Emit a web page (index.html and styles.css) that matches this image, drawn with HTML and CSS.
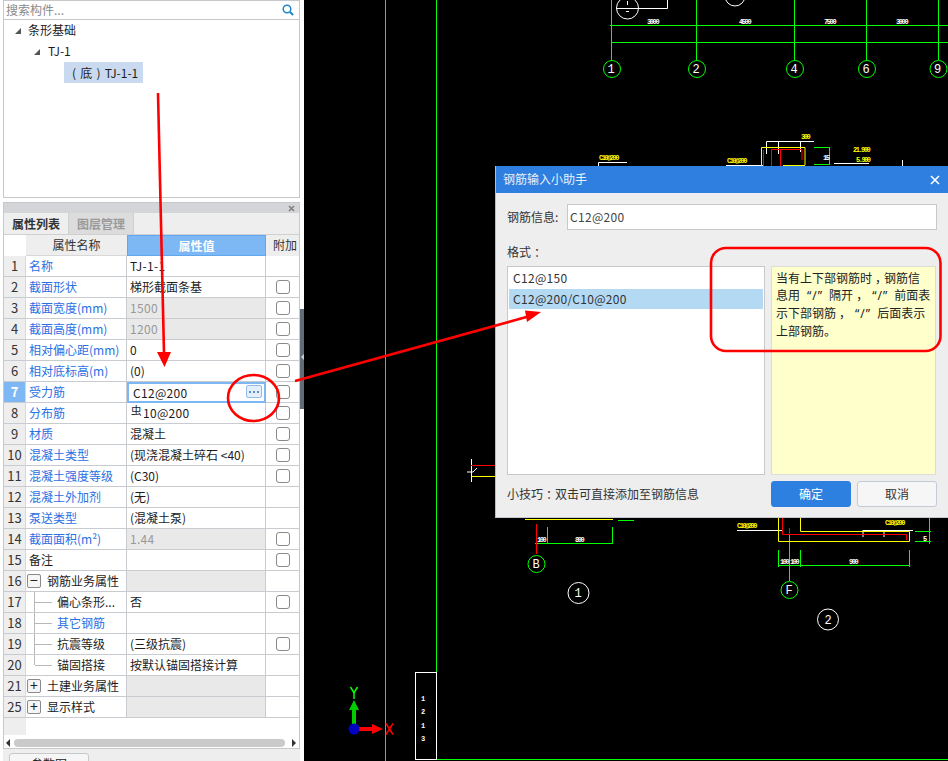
FILE: index.html
```html
<!DOCTYPE html>
<html lang="zh">
<head>
<meta charset="utf-8">
<title>钢筋输入小助手</title>
<link rel="stylesheet" href="styles.css">
</head>
<body>
<div class="app">
  <aside class="side">
    <div class="search">
      <span class="search-text">搜索构件...</span>
      <svg class="search-icon" width="12" height="12" viewBox="0 0 12 12"><circle cx="5" cy="5" r="3.8" fill="none" stroke="#1f86c8" stroke-width="1.5"/><path d="M8 8l3 3" stroke="#1f86c8" stroke-width="2"/></svg>
    </div>
    <div class="tree">
      <div class="tree-row lvl0"><span class="tri"></span>条形基础</div>
      <div class="tree-row lvl1"><span class="tri"></span>TJ-1</div>
      <div class="tree-row lvl2"><span class="tree-sel">( 底 ) TJ-1-1</span></div>
    </div>
    <div class="panel">
      <div class="panel-head"><svg class="panel-x" width="7" height="7" viewBox="0 0 7 7"><path d="M1 1L6 6M6 1L1 6" stroke="#808080" stroke-width="1.6"/></svg></div>
      <div class="tabs"><span class="tab tab-on">属性列表</span><span class="tab tab-off">图层管理</span></div>
      <div class="row head"><div class="c n blank"></div><div class="c hname">属性名称</div><div class="c hval">属性值</div><div class="c hadd">附加</div></div>
      <div class="row"><div class="c n">1</div><div class="c name link">名称</div><div class="c val lat">TJ-1-1</div><div class="c add"></div></div>
      <div class="row"><div class="c n">2</div><div class="c name link">截面形状</div><div class="c val">梯形截面条基</div><div class="c add"><i class="chk"></i></div></div>
      <div class="row"><div class="c n">3</div><div class="c name link">截面宽度(mm)</div><div class="c val off lat">1500</div><div class="c add"><i class="chk"></i></div></div>
      <div class="row"><div class="c n">4</div><div class="c name link">截面高度(mm)</div><div class="c val off lat">1200</div><div class="c add"><i class="chk"></i></div></div>
      <div class="row"><div class="c n">5</div><div class="c name link">相对偏心距(mm)</div><div class="c val">0</div><div class="c add"><i class="chk"></i></div></div>
      <div class="row"><div class="c n">6</div><div class="c name link">相对底标高(m)</div><div class="c val">(0)</div><div class="c add"><i class="chk"></i></div></div>
      <div class="row"><div class="c n n-on">7</div><div class="c name link">受力筋</div><div class="c val val-on lat">C12@200<span class="more"><b></b><b></b><b></b></span></div><div class="c add"><i class="chk"></i></div></div>
      <div class="row"><div class="c n">8</div><div class="c name link">分布筋</div><div class="c val lat val-bar"><span class="bar">虫</span>10@200</div><div class="c add"><i class="chk"></i></div></div>
      <div class="row"><div class="c n">9</div><div class="c name link">材质</div><div class="c val">混凝土</div><div class="c add"><i class="chk"></i></div></div>
      <div class="row"><div class="c n">10</div><div class="c name link">混凝土类型</div><div class="c val">(现浇混凝土碎石 &lt;40)</div><div class="c add"><i class="chk"></i></div></div>
      <div class="row"><div class="c n">11</div><div class="c name link">混凝土强度等级</div><div class="c val">(C30)</div><div class="c add"><i class="chk"></i></div></div>
      <div class="row"><div class="c n">12</div><div class="c name link">混凝土外加剂</div><div class="c val">(无)</div><div class="c add"></div></div>
      <div class="row"><div class="c n">13</div><div class="c name link">泵送类型</div><div class="c val">(混凝土泵)</div><div class="c add"></div></div>
      <div class="row"><div class="c n">14</div><div class="c name link">截面面积(m²)</div><div class="c val off lat">1.44</div><div class="c add"><i class="chk"></i></div></div>
      <div class="row"><div class="c n">15</div><div class="c name">备注</div><div class="c val"></div><div class="c add"><i class="chk"></i></div></div>
      <div class="row"><div class="c n">16</div><div class="c name group"><i class="fold">−</i>钢筋业务属性</div><div class="c val off"></div><div class="c add"></div></div>
      <div class="row"><div class="c n">17</div><div class="c name child">偏心条形...</div><div class="c val">否</div><div class="c add"><i class="chk"></i></div></div>
      <div class="row"><div class="c n">18</div><div class="c name child link">其它钢筋</div><div class="c val"></div><div class="c add"></div></div>
      <div class="row"><div class="c n">19</div><div class="c name child">抗震等级</div><div class="c val">(三级抗震)</div><div class="c add"><i class="chk"></i></div></div>
      <div class="row"><div class="c n">20</div><div class="c name child last">锚固搭接</div><div class="c val">按默认锚固搭接计算</div><div class="c add"></div></div>
      <div class="row"><div class="c n">21</div><div class="c name group"><i class="fold">+</i>土建业务属性</div><div class="c val off"></div><div class="c add"></div></div>
      <div class="row"><div class="c n">25</div><div class="c name group"><i class="fold">+</i>显示样式</div><div class="c val off"></div><div class="c add"></div></div>
      <div class="table-rest"><div class="rest-n"></div></div>
      <div class="scroll"><i class="arr-l"></i><div class="thumb"></div><i class="arr-r"></i></div>
    </div>
    <div class="foot"><span class="foot-tab">参数图</span></div>
    <div class="splitter"></div>
  </aside>

  <main class="canvas">
    <svg class="draw" width="644" height="761" viewBox="304 0 644 761">
      <g class="gl">
        <path d="M385.5 0V761M436.5 0V672M437 759.5H948"/>
        <path d="M610 25.5H948M612 42.5H948"/>
        <path d="M611.5 0V60M696.5 0V60M794.5 0V60M866.5 0V60M938.5 0V60"/>
        <path d="M814 147.500H829M814 164.500H829M829.500 147V165"/>
        <path d="M535 543.500H613M547.500 527V543M612.500 527V544M618 520.500H634"/>
        <path d="M778 565.500H910M778.500 550V567M800.500 550V567M909.500 550V567M789.500 528V581"/>
        <path d="M915 531.500H931M915 541.500H931M929.500 518V544"/>
      </g>
      <g class="gc">
        <circle cx="612" cy="69" r="8.5"/><circle cx="697" cy="69" r="8.5"/><circle cx="795" cy="69" r="8.5"/><circle cx="867" cy="69" r="8.5"/><circle cx="938.500" cy="69" r="8.5"/>
        <circle cx="536.500" cy="564" r="8.5"/><circle cx="789.500" cy="590" r="8.5"/>
      </g>
      <g class="wc">
        <circle cx="627.500" cy="8" r="11"/><circle cx="735" cy="-4" r="10"/><circle cx="578.500" cy="593" r="10.5"/><circle cx="828" cy="619.500" r="10.5"/>
      </g>
      <g class="wl">
        <path d="M616 8.500H667.500V0M627.500 1V5M626 11.500H629"/>
        <path d="M598.500 170V162.500H627M726 165.500H764M766.500 154V141.500H814M778.500 141V154M800.500 141V152M834 163.500H869M902.500 160V166"/>
        <path d="M471.500 459V482M467 472H473L477 468"/>
        <path d="M737 530.500H783M863 530.500H913M863 530V537M884 530V537"/>
        <rect x="415.500" y="672.500" width="21" height="87"/>
      </g>
      <g class="yl">
        <path d="M761.500 166V147.500H805V165M783 165.500H805"/>
        <path d="M525 519.500H613M778.500 518V541.500H909.500V531.500H800.500V518M471 476.500H495"/>
      </g>
      <g class="rl">
        <path d="M763.500 166V150M771 149.500H802V160M771.500 150V166M780.500 150V166"/>
        <path d="M536.500 524V554M782.500 518V534.500H906.500V540M789.500 528V534M471 465.500H495"/>
      </g>
      <g class="tw">
        <text x="647" y="24">3000</text><text x="739" y="24">4500</text><text x="824" y="24">7500</text><text x="896" y="24">3000</text>
        <text x="537" y="542">100</text><text x="575" y="542">800</text>
        <text x="780" y="564">100</text><text x="790" y="564">100</text><text x="849" y="564">900</text>
        <text x="823" y="160">15</text><text x="923" y="541">5</text>
      </g>
      <g class="ty">
        <text x="599" y="160">C10@200</text><text x="727" y="163">C10@200</text><text x="801" y="139">300</text>
        <text x="853" y="152">21.900</text><text x="856" y="162">5.900</text>
        <text x="737" y="528">C10@200</text><text x="885" y="525">C10@200</text>
      </g>
      <g class="tc">
        <text x="611" y="73">1</text><text x="696" y="73">2</text><text x="794" y="73">4</text><text x="866" y="73">6</text><text x="937.500" y="73">9</text>
        <text x="536" y="568">B</text><text x="789" y="594">F</text><text x="578" y="597">1</text><text x="828" y="624">2</text>
      </g>
      <g class="tv">
        <text x="423" y="701">1</text><text x="423" y="714">2</text><text x="423" y="728">1</text><text x="423" y="741">3</text>
      </g>
      <g class="axes">
        <path class="ax-g" d="M352 729V710H349L354 700L359 710H356V729Z"/>
        <path class="ax-r" d="M354 727H372V724L383 729L372 734V731H354Z"/>
        <circle class="ax-b" cx="354" cy="729" r="5.5"/>
        <path class="ax-yt" d="M350.500 687L354 693L357.500 687M354 693V699"/>
        <path class="ax-xt" d="M386 723.500L393 734.500M393 723.500L386 734.500"/>
      </g>
    </svg>

    <section class="dialog">
      <header class="dlg-title"><span>钢筋输入小助手</span>
        <svg width="10" height="10" viewBox="0 0 10 10"><path d="M1 1L9 9M9 1L1 9" stroke="#fff" stroke-width="1.6"/></svg>
      </header>
      <div class="dlg-body">
        <div class="info"><label class="info-label">钢筋信息:</label><div class="info-input lat">C12@200</div></div>
        <div class="fmt-label">格式<span class="pc">：</span></div>
        <div class="fmt">
          <div class="list">
            <div class="item item-first lat">C12@150</div>
            <div class="item item-on lat">C12@200/C10@200</div>
          </div>
          <div class="note">当有上下部钢筋时<span class="pc">，</span>钢筋信<br>息用<span class="q">“/”</span>隔开<span class="pc">，</span><span class="q">“/”</span>前面表<br>示下部钢筋<span class="pc">，</span><span class="q">“/”</span>后面表示<br>上部钢筋。</div>
        </div>
        <div class="dlg-foot">
          <span class="tip">小技巧<span class="pc">：</span>双击可直接添加至钢筋信息</span>
          <div class="btns"><button class="btn btn-ok">确定</button><button class="btn btn-no">取消</button></div>
        </div>
      </div>
    </section>
  </main>

  <svg class="marks" width="948" height="761" viewBox="0 0 948 761">
    <g class="mk">
      <path d="M158 93L164 353"/>
      <path d="M295 381L530 316"/>
      <ellipse cx="253.500" cy="398" rx="25.5" ry="23"/>
      <rect x="711" y="248" width="229.5" height="103" rx="15"/>
    </g>
    <path class="mk-fill" d="M157 352H171L164.500 367Z"/>
    <path class="mk-fill" d="M525 310.500L541 312L527 322Z"/>
  </svg>
</div>
</body>
</html>
```

FILE: styles.css
```css
* { box-sizing: border-box; }
html, body { margin: 0; height: 100%; overflow: hidden; background: #000; }
body { font: 12px/1.2 "Noto Sans CJK SC", "Noto Sans", sans-serif; color: #222; }
.app { position: relative; display: flex; width: 948px; height: 761px; overflow: hidden; }
.lat { letter-spacing: .3px; }

/* left panel */
.side { position: relative; flex: 0 0 304px; height: 761px; background: #fff; padding: 0 4px 0 3px; display: flex; flex-direction: column; }
.search { height: 20px; flex: none; border: 1px solid #c6c8cc; display: flex; align-items: center; justify-content: space-between; padding: 0 5px 0 2px; color: #8a8a8a; }
.tree { height: 178px; flex: none; border: 1px solid #c6c8cc; border-top: 0; }
.tree-row { height: 21px; display: flex; align-items: center; white-space: nowrap; color: #1c1c1c; }
.lvl0 { padding-left: 8px; }
.lvl1 { padding-left: 27px; }
.lvl2 { padding-left: 60px; }
.tri { width: 0; height: 0; margin: 0 7px 0 3px; border-style: solid; border-width: 0 0 6px 6px; border-color: transparent transparent #555 transparent; }
.lvl1 .tri { margin: 0 8px 0 3px; }
.tree-sel { display: block; width: 79px; background: #c8d9f0; height: 21px; line-height: 21px; padding-left: 8px; word-spacing: 1.5px; }

.panel { margin-top: 4px; height: 547px; flex: none; border: 1px solid #c6c8cc; background: #fff; display: flex; flex-direction: column; }
.panel-head { height: 10px; flex: none; background: #d4d5d9; position: relative; }
.panel-x { position: absolute; right: 4px; top: 2px; }
.tabs { height: 22px; flex: none; background: #eeeeee; display: flex; border-bottom: 1px solid #d0d0d0; }
.tab { width: 65px; line-height: 21px; text-align: center; font-weight: 700; }
.tab-on { color: #333; background: #eeeeee; border-right: 1px solid #d0d0d0; }
.tab-off { color: #9a9a9a; background: #dcdcdc; border-right: 1px solid #d0d0d0; }

.row { display: grid; grid-template-columns: 22px 101px 139px 33px; height: 21px; flex: none; }
.c { border-bottom: 1px solid #c8cbd0; border-right: 1px solid #c8cbd0; line-height: 20px; white-space: nowrap; overflow: hidden; position: relative; }
.n { background: #eeeeee; text-align: center; color: #333; font-size: 13px; border-right: 1px solid #d8d8d8; }
.n-on { background: #7db8f5; color: #fff; font-weight: 700; }
.name { padding-left: 3px; color: #1c1c1c; }
.link { color: #2b6fe3; }
.val { padding-left: 3px; color: #1c1c1c; }
.add { border-right: 0; display: flex; align-items: center; justify-content: center; }
.off { background: #e9e9e9; color: #999; }
.val-on { border: 2px solid #7db8f5; padding-left: 4px; line-height: 17px; }
.val-bar { line-height: 18px; padding-top: 1px; }
.bar { display: inline-block; width: 13px; font-size: 11px; line-height: 11px; vertical-align: 3px; text-align: center; }
.more { position: absolute; right: 2px; top: 1px; width: 16px; height: 13px; border: 1px solid #8fbdea; border-radius: 2px; background: #e4effb; display: flex; align-items: center; justify-content: center; gap: 2px; }
.more b { width: 2px; height: 2px; background: #5a8fc8; }
.chk { display: block; width: 14px; height: 14px; border: 1px solid #8a8a8a; border-radius: 3px; background: #fff; }

.head .c { line-height: 20px; text-align: center; }
.blank { background: #fff; border: 0; }
.hname { background: #eeeeee; border-right: 0; border-bottom: 1px solid #d8d8d8; color: #333; }
.hval { background: #7db8f5; color: #fff; border: 1px solid #5fa8ef; font-weight: 700; }
.head .hadd { background: #eeeeee; border: 0; color: #333; text-align: left; padding-left: 7px; overflow: hidden; }

.group { display: flex; align-items: center; padding-left: 1px; }
.fold { flex: none; width: 14px; height: 14px; margin-right: 6px; border: 1px solid #8a8a8a; border-radius: 2px; font-style: normal; font-size: 14px; line-height: 11px; text-align: center; color: #222; background: #f6f6f6; }
.child { padding-left: 31px; }
.child.link { color: #2b6fe3; }
.child::before { content: ""; position: absolute; left: 8px; top: 0; bottom: 0; border-left: 1px solid #b8b8b8; }
.child::after { content: ""; position: absolute; left: 9px; width: 17px; top: 10px; border-top: 1px solid #b8b8b8; }
.last::before { bottom: 10px; }

.table-rest { height: 18px; flex: none; }
.rest-n { width: 22px; height: 17px; background: #eeeeee; }
.scroll { height: 14px; flex: none; display: flex; align-items: center; padding: 0 2px; gap: 3px; border-bottom: 1px solid #c6c8cc; }
.thumb { width: 271px; height: 8px; border-radius: 4px; background: #cacaca; margin-left: 1px; }
.arr-l, .arr-r { width: 0; height: 0; border-style: solid; border-width: 4px 0; border-color: transparent; }
.arr-l { border-right: 4px solid #333; }
.arr-r { border-left: 4px solid #333; margin-left: 4px; }
.foot { flex: 1; background: #eeeeee; padding: 4px 0 0 6px; }
.foot-tab { display: block; width: 80px; height: 22px; border: 1px solid #c6c8cc; border-radius: 3px 3px 0 0; background: #f6f6f6; text-align: center; line-height: 20px; }
.splitter { position: absolute; left: 300px; top: 309px; width: 4px; height: 100px; background: #616c78; }
.splitter::after { content: ""; position: absolute; left: 1px; top: 45px; border-style: solid; border-width: 3px 3px 3px 0; border-color: transparent #c9ced3 transparent transparent; }

/* drawing */
.canvas { position: relative; flex: 0 0 644px; height: 761px; background: #000; }
.draw { display: block; }
.gl path { fill: none; stroke: #0f0; stroke-width: 1; }
.gc circle { fill: #000; stroke: #0f0; stroke-width: 1; }
.wc circle { fill: #000; stroke: #fff; stroke-width: 1; }
.wl path, .wl rect { fill: none; stroke: #fff; stroke-width: 1; }
.yl path { fill: none; stroke: #ff0; stroke-width: 1; }
.rl path { fill: none; stroke: #f00; stroke-width: 1; }
.tw text { fill: #fff; font: 700 7px "Liberation Mono", monospace; letter-spacing: -1.4px; }
.ty text { fill: #ff0; font: 700 7px "Liberation Mono", monospace; letter-spacing: -1.5px; }
.tc text { fill: #fff; font: 12px "Liberation Mono", monospace; text-anchor: middle; }
.tv text { fill: #fff; font: 700 7px "Liberation Mono", monospace; text-anchor: middle; }
.ax-g { fill: #0c0; }
.ax-r { fill: #f00; }
.ax-b { fill: #0000c0; }
.ax-yt { fill: none; stroke: #0f0; stroke-width: 1.5; }
.ax-xt { fill: none; stroke: #f00; stroke-width: 1.5; }

/* dialog */
.dialog { position: absolute; left: 191px; top: 166px; width: 453px; height: 352px; background: #eeeeee; border-left: 1px solid #b9bdc4; border-bottom: 1px solid #c5c9d0; display: flex; flex-direction: column; }
.dlg-title { height: 27px; flex: none; background: #2e7fdf; color: #e8f1fb; display: flex; align-items: center; justify-content: space-between; padding: 0 8px 0 7px; }
.dlg-body { flex: 1; padding: 11px 11px 0 11px; display: flex; flex-direction: column; }
.info { display: flex; align-items: center; height: 26px; }
.info-label { width: 60px; flex: none; color: #333; }
.info-input { width: 370px; height: 26px; border: 1px solid #c6c8cc; background: #fff; line-height: 24px; padding-left: 2px; color: #444; }
.fmt-label { margin-top: 14px; height: 22px; line-height: 16px; color: #333; }
.pc { font-feature-settings: "halt"; padding: 0 3px; }
.q { font-family: "Noto Sans", sans-serif; margin: 0 6px 0 7px; letter-spacing: 1px; }
.fmt { display: flex; gap: 6px; height: 209px; }
.list { width: 258px; border: 1px solid #c6c8cc; background: #fff; padding: 1px; }
.item { padding-left: 4px; color: #333; }
.item-first { height: 21px; line-height: 19px; }
.item-on { height: 20px; line-height: 20px; background: #b3d9f3; }
.note { width: 165px; background: #ffffcc; border: 1px solid #dcdcd8; padding: 2px 4px; line-height: 17px; white-space: nowrap; color: #222; }
.dlg-foot { display: flex; align-items: center; justify-content: space-between; height: 26px; margin-top: 6px; }
.tip { color: #333; }
.btns { display: flex; gap: 6px; }
.btn { width: 80px; height: 26px; padding: 0; border-radius: 3px; font: inherit; }
.btn-ok { background: #2e80e0; color: #fff; border: 1px solid #2e80e0; }
.btn-no { background: #f6f6f6; color: #333; border: 1px solid #c5cbd6; }

/* red hand-drawn annotations */
.marks { position: absolute; left: 0; top: 0; pointer-events: none; }
.mk path, .mk ellipse, .mk rect { fill: none; stroke: #f00; stroke-width: 2.6; }
.mk-fill { fill: #f00; }
```
